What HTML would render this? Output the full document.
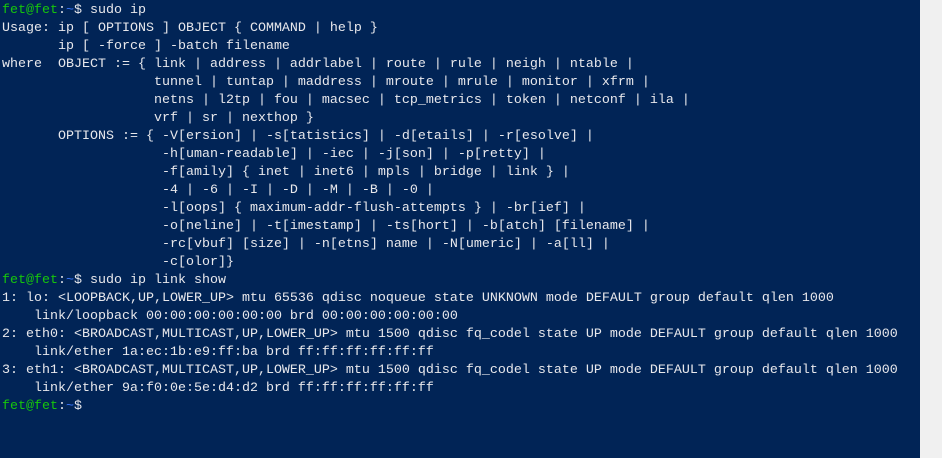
<!DOCTYPE html>
<html><head><meta charset="utf-8"><style>
html,body{margin:0;padding:0;width:942px;height:458px;overflow:hidden;background:#f0f0f0}
.t{position:absolute;left:0;top:0;width:920px;height:458px;background:#012456}
pre{margin:0;position:absolute;left:2px;top:2px;font-family:"Liberation Mono",monospace;font-size:13.33px;line-height:18px;color:#e8e8ec;white-space:pre}
.g{color:#16c60c}.b{color:#3b78ff}
</style></head><body><div class="t"><pre><span class="g">fet@fet</span>:<span class="b">~</span>$ sudo ip
Usage: ip [ OPTIONS ] OBJECT { COMMAND | help }
       ip [ -force ] -batch filename
where  OBJECT := { link | address | addrlabel | route | rule | neigh | ntable |
                   tunnel | tuntap | maddress | mroute | mrule | monitor | xfrm |
                   netns | l2tp | fou | macsec | tcp_metrics | token | netconf | ila |
                   vrf | sr | nexthop }
       OPTIONS := { -V[ersion] | -s[tatistics] | -d[etails] | -r[esolve] |
                    -h[uman-readable] | -iec | -j[son] | -p[retty] |
                    -f[amily] { inet | inet6 | mpls | bridge | link } |
                    -4 | -6 | -I | -D | -M | -B | -0 |
                    -l[oops] { maximum-addr-flush-attempts } | -br[ief] |
                    -o[neline] | -t[imestamp] | -ts[hort] | -b[atch] [filename] |
                    -rc[vbuf] [size] | -n[etns] name | -N[umeric] | -a[ll] |
                    -c[olor]}
<span class="g">fet@fet</span>:<span class="b">~</span>$ sudo ip link show
1: lo: &lt;LOOPBACK,UP,LOWER_UP&gt; mtu 65536 qdisc noqueue state UNKNOWN mode DEFAULT group default qlen 1000
    link/loopback 00:00:00:00:00:00 brd 00:00:00:00:00:00
2: eth0: &lt;BROADCAST,MULTICAST,UP,LOWER_UP&gt; mtu 1500 qdisc fq_codel state UP mode DEFAULT group default qlen 1000
    link/ether 1a:ec:1b:e9:ff:ba brd ff:ff:ff:ff:ff:ff
3: eth1: &lt;BROADCAST,MULTICAST,UP,LOWER_UP&gt; mtu 1500 qdisc fq_codel state UP mode DEFAULT group default qlen 1000
    link/ether 9a:f0:0e:5e:d4:d2 brd ff:ff:ff:ff:ff:ff
<span class="g">fet@fet</span>:<span class="b">~</span>$</pre></div></body></html>
